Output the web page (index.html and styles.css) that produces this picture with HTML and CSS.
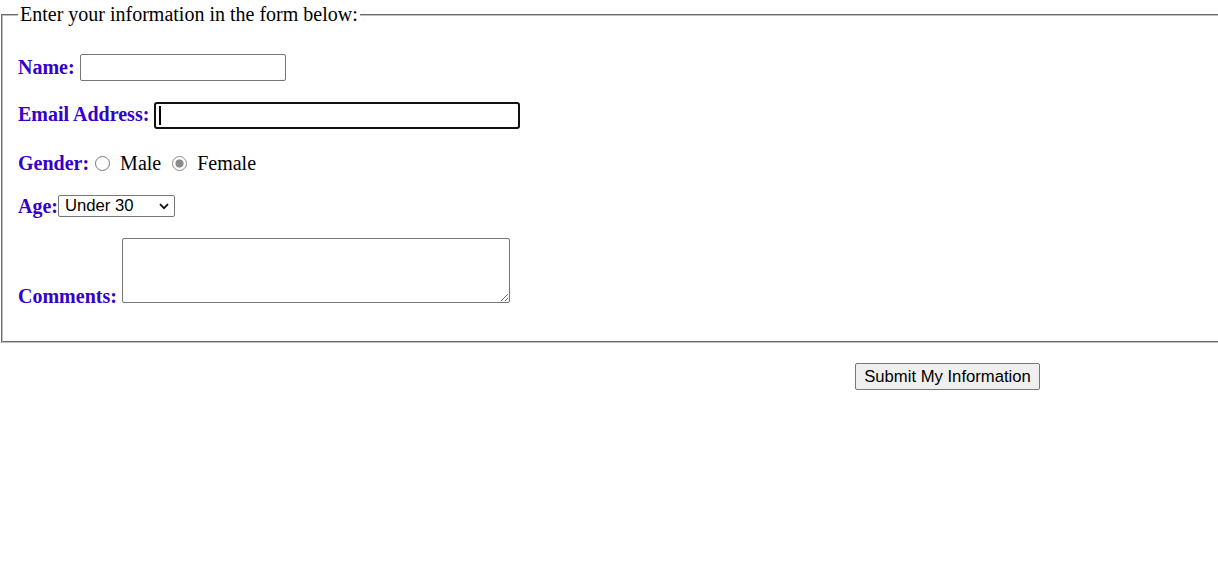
FILE: index.html
```html
<!DOCTYPE html>
<html lang="en">
<head>
<meta charset="utf-8">
<title>Information Form</title>
<link rel="stylesheet" href="styles.css">
</head>
<body>
<form class="info-form">
  <fieldset class="info-box">
    <legend class="info-legend">Enter your information in the form below:</legend>
    <div class="row row-name">
      <label class="field-label" for="name">Name:</label>
      <input id="name" class="text-input name-input" type="text">
    </div>
    <div class="row row-email">
      <label class="field-label email-label" for="email">Email Address:</label>
      <span class="focus-wrap"><input id="email" class="text-input email-input" type="text"></span>
    </div>
    <div class="row row-gender">
      <span class="field-label">Gender:</span>
      <input id="male" class="radio radio-first" type="radio" name="gender">
      <label class="opt-label" for="male">Male</label>
      <input id="female" class="radio" type="radio" name="gender" checked>
      <label class="opt-label" for="female">Female</label>
    </div>
    <div class="row row-age">
      <label class="field-label age-label" for="age">Age:</label>
      <span class="select-wrap">
        <select id="age" class="age-select">
          <option>Under 30</option>
          <option>30 to 50</option>
          <option>Over 50</option>
        </select>
        <svg class="chevron" width="10" height="7" viewBox="0 0 10 7" aria-hidden="true"><path d="M1 1.2 L5 5.2 L9 1.2" fill="none" stroke="#111" stroke-width="1.8"/></svg>
      </span>
    </div>
    <div class="row row-comments">
      <label class="field-label comments-label" for="comments">Comments:</label>
      <textarea id="comments" class="comments-box"></textarea>
    </div>
  </fieldset>
  <div class="submit-row">
    <button type="button" class="submit-btn">Submit My Information</button>
  </div>
</form>
</body>
</html>
```

FILE: styles.css
```css
html {
  overflow: hidden;
  background: #fff;
}

body {
  margin: 0;
  font-family: "Liberation Serif", "Times New Roman", serif;
  font-size: 20px;
  color: #000;
}

.info-form {
  width: 1895px;
}

.info-box {
  margin: 3px 0 0 1px;
  border: 2px groove #c0c0c0;
  padding: 7px 15px 15px 15px;
  min-width: 0;
}

.info-legend {
  padding: 0 2px;
  font-size: 20px;
  line-height: 23px;
}

.row {
  display: flex;
  align-items: center;
  margin: 20px 0;
}

.row-name { height: 27px; margin-top: 21px; }
.row-email { height: 28px; }
.row-gender { height: 23px; padding-top: 3px; margin-bottom: 17px; }
.row-age { height: 26px; margin-top: 17px; }
.row-comments { height: 68px; align-items: flex-end; }

.field-label {
  font-weight: bold;
  color: #3300cc;
  white-space: nowrap;
}

.email-label {
  margin-top: -2px;
}

.age-label {
  margin-top: 2px;
}

.text-input {
  box-sizing: border-box;
  height: 27px;
  margin: 0;
  border: 1px solid #767676;
  border-radius: 2px;
  background: #fff;
  font-family: "Liberation Sans", Arial, sans-serif;
  font-size: 16px;
  padding: 1px 3px;
}

.name-input {
  width: 206px;
  margin-left: 5px;
}

.focus-wrap {
  position: relative;
  display: block;
  margin-left: 5px;
  margin-top: 1px;
}

.focus-wrap::after {
  content: "";
  position: absolute;
  left: 5px;
  top: 4px;
  width: 2px;
  height: 19px;
  background: #000;
}

.email-input {
  display: block;
  width: 366px;
  border: 2px solid #111;
  border-radius: 3px;
  outline: none;
}

.radio {
  appearance: none;
  -webkit-appearance: none;
  box-sizing: border-box;
  width: 15px;
  height: 15px;
  margin: 0 10px 0 11px;
  border: 1px solid #767676;
  border-radius: 50%;
  background: #fff;
}

.radio-first {
  margin-left: 6px;
}

.radio:checked {
  border-color: #8a8a8a;
  background: radial-gradient(circle, #8a8a8a 0 3.6px, #fff 4.6px);
}

.opt-label {
  color: #000;
}

.select-wrap {
  position: relative;
  display: block;
  margin-top: 1px;
}

.age-select {
  appearance: none;
  -webkit-appearance: none;
  box-sizing: border-box;
  display: block;
  width: 117px;
  height: 22px;
  margin: 0;
  padding: 0 20px 0 6px;
  border: 1px solid #767676;
  border-radius: 2px;
  background: #fff;
  color: #000;
  font-family: "Liberation Sans", Arial, sans-serif;
  font-size: 16.67px;
  line-height: 20px;
}

.chevron {
  position: absolute;
  left: 101px;
  top: 8px;
  pointer-events: none;
}

.comments-label {
  line-height: 16px;
  margin-bottom: 2px;
}

.comments-box {
  box-sizing: border-box;
  width: 388px;
  height: 65px;
  margin: 0 0 3px 5px;
  border: 1px solid #767676;
  border-radius: 2px;
  padding: 2px;
  font-family: "Liberation Mono", monospace;
  font-size: 16px;
}

.submit-row {
  text-align: center;
  margin-top: 20px;
}

.submit-btn {
  box-sizing: border-box;
  height: 27px;
  margin: 0;
  padding: 0 8px;
  border: 1px solid #767676;
  border-radius: 2px;
  background: #efefef;
  color: #000;
  font-family: "Liberation Sans", Arial, sans-serif;
  font-size: 16.67px;
}
```
